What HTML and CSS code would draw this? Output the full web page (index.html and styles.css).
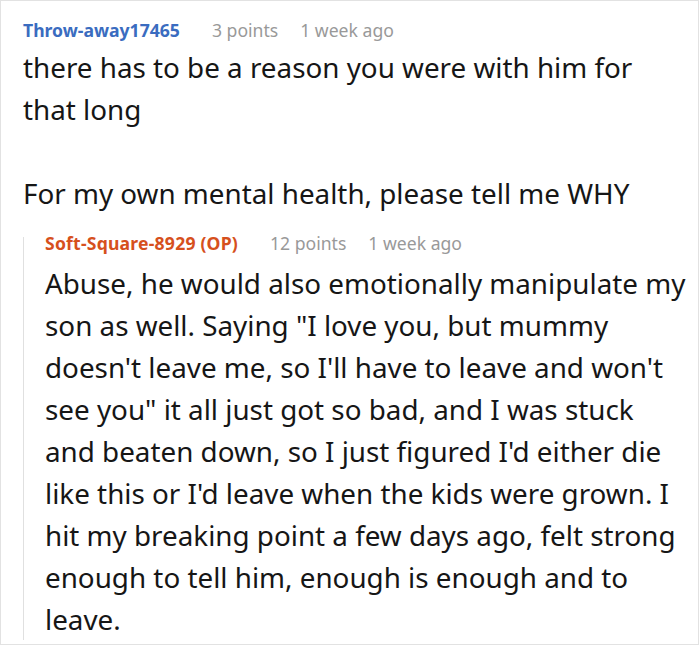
FILE: index.html
```html
<!DOCTYPE html>
<html>
<head>
<meta charset="utf-8">
<link rel="stylesheet" href="styles.css">
</head>
<body>
<div class="frame">
  <div class="comment">
    <div class="meta"><span class="author">Throw-away17465</span><span class="info">3 points</span><span class="info">1 week ago</span></div>
    <div class="body">
      <p>there has to be a reason you were with him for that long</p>
      <p>For my own mental health, please tell me WHY</p>
    </div>
    <div class="reply">
      <div class="meta"><span class="author op">Soft-Square-8929 (OP)</span><span class="info">12 points</span><span class="info">1 week ago</span></div>
      <div class="body">
        <p>Abuse, he would also emotionally manipulate my son as well. Saying "I love you, but mummy doesn't leave me, so I'll have to leave and won't see you" it all just got so bad, and I was stuck and beaten down, so I just figured I'd either die like this or I'd leave when the kids were grown. I hit my breaking point a few days ago, felt strong enough to tell him, enough is enough and to leave.</p>
      </div>
    </div>
  </div>
</div>
</body>
</html>
```
FILE: styles.css
```css
html, body {
  margin: 0;
  padding: 0;
  background: #fff;
}
.frame {
  width: 699px;
  height: 645px;
  box-sizing: border-box;
  border: 1px solid #e2e2e2;
  overflow: hidden;
  font-family: "Noto Sans", "Open Sans", sans-serif;
  color: #161616;
}
.comment {
  padding: 17px 10px 0 22px;
}
.meta {
  font-size: 17.6px;
  line-height: 24px;
  display: flex;
}
.author {
  font-weight: bold;
  color: #3a6cc0;
  margin-right: 32px;
}
.author.op {
  color: #d6501d;
  letter-spacing: 0.2px;
}
.info {
  color: #999;
  margin-right: 22px;
}
.body {
  font-size: 27.8px;
  line-height: 42px;
}
.body p {
  margin: 0 0 42px 0;
}
.body p:last-child {
  margin-bottom: 0;
}
.comment > .body {
  margin-top: 4px;
}
.reply {
  margin-top: 23px;
  border-left: 1px solid #e0e0e0;
  padding-left: 21px;
}
.reply .meta {
  line-height: 12px;
}
.reply .body {
  margin-top: 13px;
}
.reply .body p:last-child {
  margin-bottom: -13px;
}
```
